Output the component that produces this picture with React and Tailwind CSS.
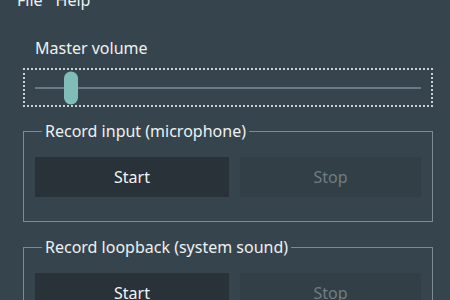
import { useState } from 'react';

function GroupBox({ title, children }) {
  return (
    <fieldset className="border border-[#7c8a91] px-[11px] pt-[16px] pb-[24px]">
      <legend className="ml-[7px] px-[3px] leading-[20px] text-[#eef1f2]">{title}</legend>
      {children}
    </fieldset>
  );
}

function RecordButtons({ recording, onStart, onStop }) {
  return (
    <div className="flex gap-[11px]">
      <button
        onClick={onStart}
        className="w-[194px] h-[40px] bg-[#293238] text-[#f2f4f5]"
      >
        Start
      </button>
      <button
        onClick={onStop}
        disabled={!recording}
        className="flex-1 h-[40px] bg-[#323f46] text-[#6f7d84]"
      >
        Stop
      </button>
    </div>
  );
}

export default function App() {
  const [volume] = useState(10);
  const [mic, setMic] = useState(false);
  const [loop, setLoop] = useState(false);

  return (
    <div className="w-[450px] h-[300px] overflow-hidden bg-[#36454d] text-[16px] font-['Noto_Sans','Open_Sans',sans-serif] text-[#eef1f2]">
      {/* menu bar, scrolled partly out of view */}
      <div className="h-[12px] overflow-hidden">
        <div className="flex gap-[13px] px-[17px] -mt-[10px] leading-[20px]">
          <span>File</span>
          <span>Help</span>
        </div>
      </div>

      <div className="pl-[23px] pr-[17px]">
        <div className="pl-[12px] mt-[26px] leading-[20px]">Master volume</div>

        <div className="mt-[10px] h-[39px] border-2 border-dotted border-[#c9d0d3] flex items-center px-[10px]">
          <div className="relative w-full h-[2px] bg-[#687b84]">
            <div
              className="absolute top-1/2 -translate-y-1/2 w-[14px] h-[33px] rounded-full bg-[#80bdb9]"
              style={{ left: `${volume * 2.9}px` }}
            />
          </div>
        </div>

        <div className="mt-[14px] flex flex-col gap-[15px]">
          <GroupBox title="Record input (microphone)">
            <RecordButtons recording={mic} onStart={() => setMic(true)} onStop={() => setMic(false)} />
          </GroupBox>
          <GroupBox title="Record loopback (system sound)">
            <RecordButtons recording={loop} onStart={() => setLoop(true)} onStop={() => setLoop(false)} />
          </GroupBox>
        </div>
      </div>
    </div>
  );
}
